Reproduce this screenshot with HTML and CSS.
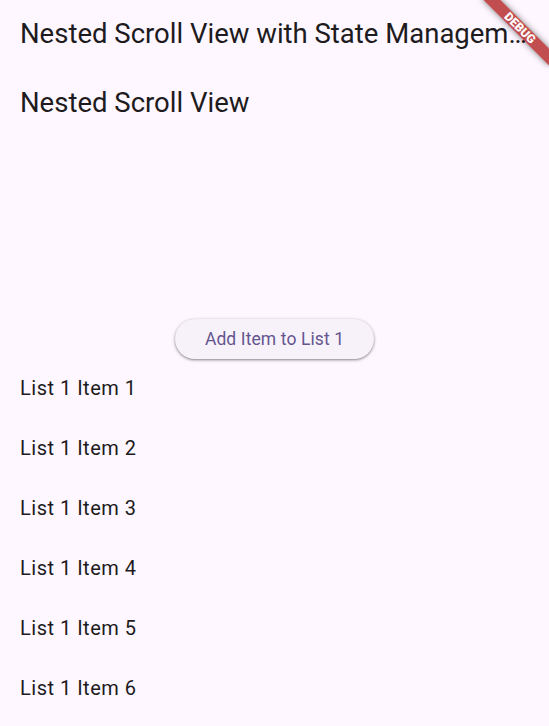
FILE: index.html
```html
<!DOCTYPE html>
<html>
<head>
<meta charset="utf-8">
<link rel="stylesheet" href="styles.css">
</head>
<body>
<div class="app">
  <header class="appbar">
    <h1 class="appbar-title">Nested Scroll View with State Management Example</h1>
  </header>
  <main class="content">
    <h2 class="heading">Nested Scroll View</h2>
    <div class="spacer"></div>
    <div class="button-row">
      <button class="add-btn">Add Item to List 1</button>
    </div>
    <ul class="list">
      <li class="list-item">List 1 Item 1</li>
      <li class="list-item">List 1 Item 2</li>
      <li class="list-item">List 1 Item 3</li>
      <li class="list-item">List 1 Item 4</li>
      <li class="list-item">List 1 Item 5</li>
      <li class="list-item">List 1 Item 6</li>
    </ul>
  </main>
  <div class="debug-banner"><span>DEBUG</span></div>
</div>
</body>
</html>
```
FILE: styles.css
```css
* { box-sizing: border-box; }
html, body {
  margin: 0;
  padding: 0;
  width: 549px;
  height: 726px;
  overflow: hidden;
  background: #fef7ff;
  font-family: Roboto, "Noto Sans", sans-serif;
  color: #1d1b20;
}
.app {
  position: relative;
  width: 549px;
  height: 726px;
  overflow: hidden;
}
.appbar {
  height: 67px;
  display: flex;
  align-items: center;
  padding: 0 0 0 20px;
}
.appbar-title {
  margin: 0;
  font-size: 27.5px;
  font-weight: 400;
  line-height: 34px;
  white-space: nowrap;
  overflow: hidden;
  text-overflow: ellipsis;
  width: 513px;
}
.content {
  display: flex;
  flex-direction: column;
}
.heading {
  margin: 19px 0 0 0;
  padding: 0 20px;
  font-size: 27.5px;
  font-weight: 400;
  line-height: 34px;
}
.spacer {
  height: 199px;
}
.button-row {
  display: flex;
  justify-content: center;
}
.add-btn {
  height: 40px;
  width: 199px;
  border: none;
  border-radius: 20px;
  background: #f7f2fa;
  color: #65558f;
  font-family: Roboto, sans-serif;
  font-size: 17.5px;
  font-weight: 400;
  letter-spacing: 0.1px;
  box-shadow: 0 1px 2px rgba(0,0,0,0.3), 0 1px 3px 1px rgba(0,0,0,0.15);
  padding: 0;
}
.list {
  list-style: none;
  margin: -1px 0 0 0;
  padding: 0;
}
.list-item {
  height: 60px;
  display: flex;
  align-items: center;
  padding: 0 20px;
  font-size: 20px;
  letter-spacing: 0.5px;
  color: #1d1b20;
}
.debug-banner {
  position: absolute;
  left: 473px;
  top: 22px;
  width: 94px;
  height: 12px;
  background: rgba(176, 30, 30, 0.78);
  transform: rotate(45deg);
  box-shadow: 0 0 6px rgba(0,0,0,0.5);
  display: flex;
  align-items: center;
  justify-content: center;
}
.debug-banner span {
  color: #fff;
  font-size: 12px;
  font-weight: 900;
  line-height: 1;
  font-family: Roboto, sans-serif;
}
```
